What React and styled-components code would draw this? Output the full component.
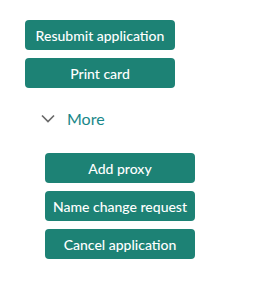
import React from 'react';
import styled, { createGlobalStyle } from 'styled-components';

const GlobalStyle = createGlobalStyle`
  body {
    margin: 0;
    background: #fff;
    font-family: Lato, "Liberation Sans", sans-serif;
  }
`;

const Panel = styled.div`
  display: flex;
  flex-direction: column;
  align-items: flex-start;
  padding: 20px 0 0 25px;
`;

const ActionButton = styled.button`
  width: 150px;
  height: 30px;
  margin-bottom: 8px;
  padding: 0;
  border: none;
  border-radius: 4px;
  background: #1d8275;
  color: #fff;
  font-family: Lato, "Liberation Sans", sans-serif;
  font-size: 14px;
  font-weight: 500;
  cursor: pointer;
`;

const MoreToggle = styled.button`
  display: flex;
  align-items: center;
  gap: 12px;
  height: 30px;
  margin: 7px 0 20px 16px;
  padding: 0;
  border: none;
  background: none;
  color: #198789;
  font-family: Lato, "Liberation Sans", sans-serif;
  font-size: 16px;
  cursor: pointer;
`;

const MoreGroup = styled.div`
  display: flex;
  flex-direction: column;
  padding-left: 20px;
`;

const Chevron = () => (
  <svg width="14" height="9" viewBox="0 0 14 9" fill="none">
    <path d="M1 1.5 L7 7.5 L13 1.5" stroke="#6a6a6a" strokeWidth="1.7" />
  </svg>
);

export default function App() {
  return (
    <>
      <GlobalStyle />
      <Panel>
        <ActionButton>Resubmit application</ActionButton>
        <ActionButton>Print card</ActionButton>
        <MoreToggle>
          <Chevron />
          More
        </MoreToggle>
        <MoreGroup>
          <ActionButton>Add proxy</ActionButton>
          <ActionButton>Name change request</ActionButton>
          <ActionButton>Cancel application</ActionButton>
        </MoreGroup>
      </Panel>
    </>
  );
}
